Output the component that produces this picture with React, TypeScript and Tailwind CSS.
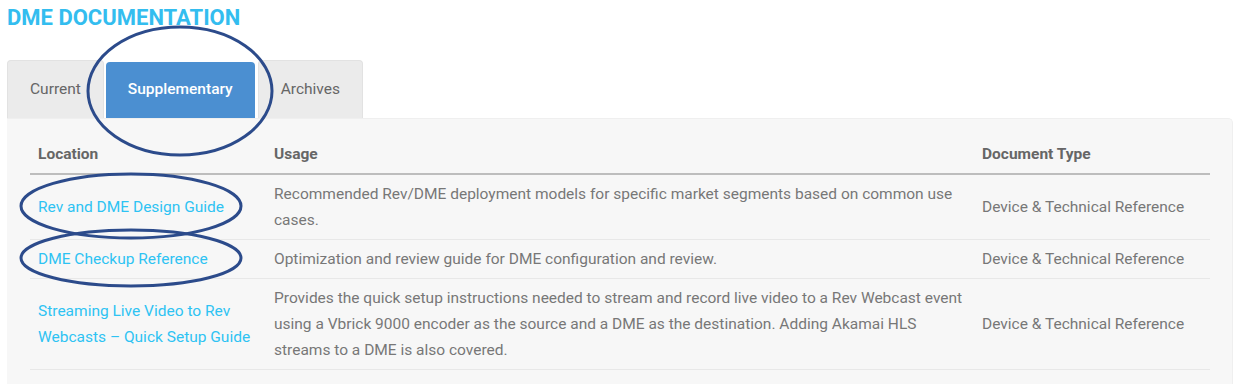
import React from "react";

const rows = [
  {
    loc: ["Rev and DME Design Guide"],
    usage: [
      "Recommended Rev/DME deployment models for specific market segments based on common use",
      "cases.",
    ],
  },
  {
    loc: ["DME Checkup Reference"],
    usage: ["Optimization and review guide for DME configuration and review."],
  },
  {
    loc: ["Streaming Live Video to Rev", "Webcasts – Quick Setup Guide"],
    usage: [
      "Provides the quick setup instructions needed to stream and record live video to a Rev Webcast event",
      "using a Vbrick 9000 encoder as the source and a DME as the destination. Adding Akamai HLS",
      "streams to a DME is also covered.",
    ],
  },
];

export default function App() {
  return (
    <div
      className="relative w-[1242px] h-[384px] overflow-hidden bg-white"
      style={{ fontFamily: "Roboto, 'Liberation Sans', sans-serif" }}
    >
      <div className="pl-[7px] pt-[5px]">
        <h1 className="text-[22px] leading-[26px] font-bold text-[#33bdef]">
          DME DOCUMENTATION
        </h1>
        <div className="mt-[29px] flex items-end h-[58px]">
          <div className="h-[58px] px-[22px] flex items-center bg-[#ebebeb] border border-b-0 border-[#e2e2e2] rounded-t-[4px] text-[15.5px] text-[#666]">
            Current
          </div>
          <div className="ml-[2px] h-[56px] px-[22px] flex items-center bg-[#4b8fd1] rounded-t-[4px] text-[15.5px] font-medium text-white">
            Supplementary
          </div>
          <div className="ml-[3px] h-[58px] px-[22px] flex items-center bg-[#ebebeb] border border-b-0 border-[#e2e2e2] rounded-t-[4px] text-[15.5px] text-[#666]">
            Archives
          </div>
        </div>
        <div className="w-[1226px] bg-[#f7f7f7] rounded-tr-[5px] border-r border-t border-[#efefef] pt-[16px] pl-[23px] pr-[21px] pb-[20px]">
          <table className="w-[1180px] border-collapse text-[15.5px] text-[#777]">
            <thead>
              <tr className="border-b-2 border-[#bdbdbd]">
                <th className="w-[236px] text-left font-bold text-[#666] px-[8px] pt-[8px] pb-[8px] leading-[22px]">Location</th>
                <th className="w-[708px] text-left font-bold text-[#666] px-[8px] pt-[8px] pb-[8px] leading-[22px]">Usage</th>
                <th className="w-[236px] text-left font-bold text-[#666] px-[8px] pt-[8px] pb-[8px] leading-[22px]">Document Type</th>
              </tr>
            </thead>
            <tbody>
              {rows.map((r, i) => (
                <tr key={i} className="border-b border-[#e8e8e8]">
                  <td className="align-middle px-[8px] py-[6px] leading-[26px] text-[#2ec3f3]">
                    {r.loc.map((l, j) => (
                      <div key={j} className="whitespace-nowrap">{l}</div>
                    ))}
                  </td>
                  <td className="align-middle px-[8px] py-[6px] leading-[26px]">
                    {r.usage.map((l, j) => (
                      <div key={j} className="whitespace-nowrap">{l}</div>
                    ))}
                  </td>
                  <td className="align-middle px-[8px] py-[6px] leading-[26px] whitespace-nowrap">
                    Device &amp; Technical Reference
                  </td>
                </tr>
              ))}
            </tbody>
          </table>
        </div>
      </div>
      <svg
        className="absolute left-0 top-0 pointer-events-none"
        width="1242"
        height="384"
        viewBox="0 0 1242 384"
      >
        <g fill="none" stroke="#2c4b8b" strokeWidth="3">
          <ellipse cx="180" cy="91" rx="92" ry="64" />
          <ellipse cx="131" cy="206" rx="110" ry="32" />
          <ellipse cx="131" cy="258" rx="110" ry="28" />
        </g>
      </svg>
    </div>
  );
}
